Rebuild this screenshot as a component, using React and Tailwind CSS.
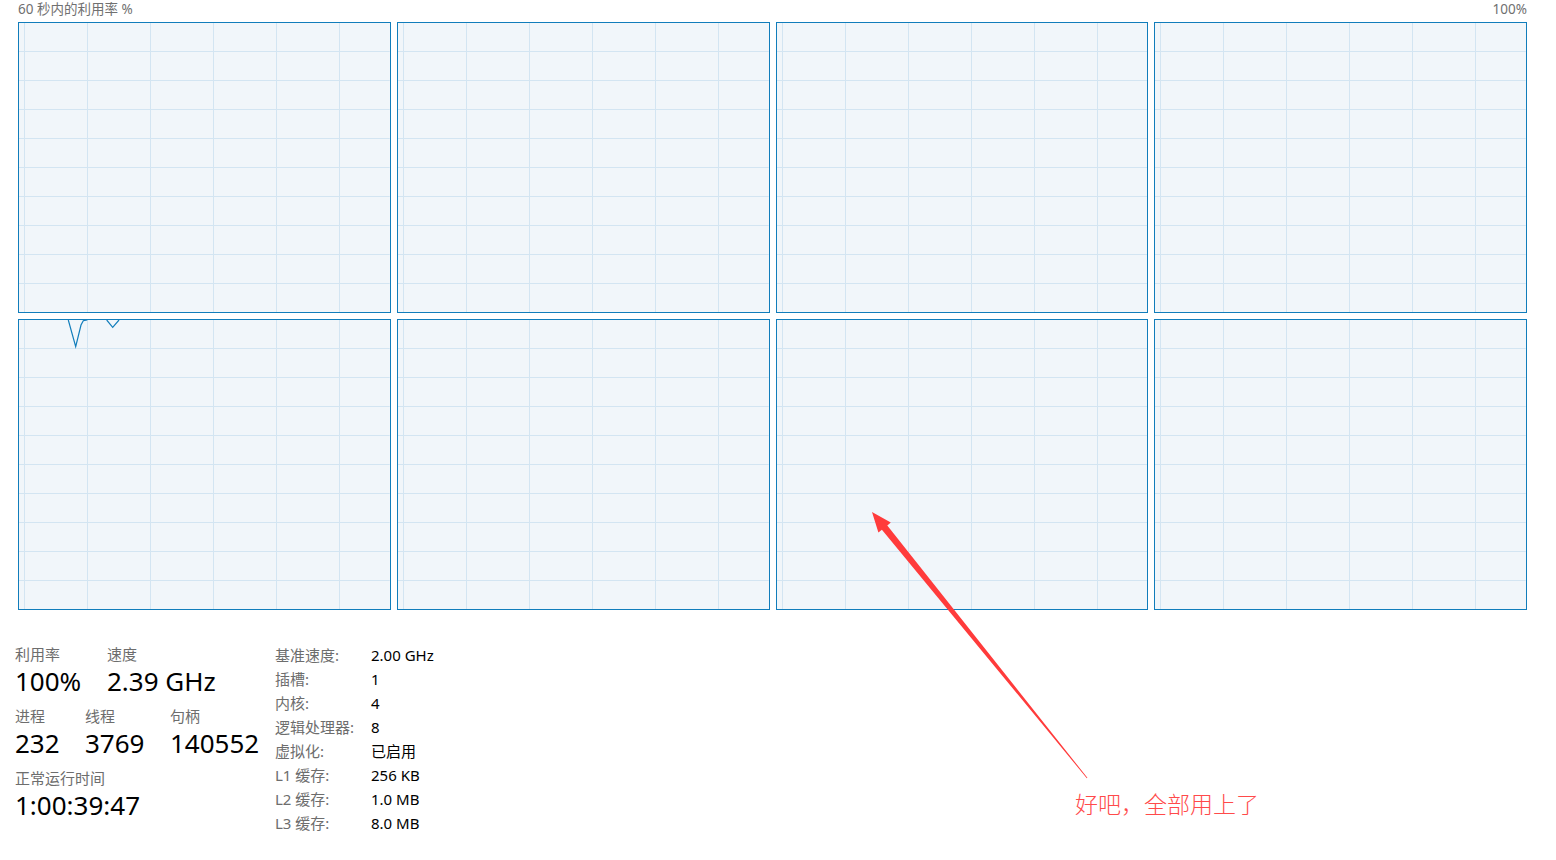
import React from "react";

const FONT = { fontFamily: '"Noto Sans", "Noto Sans CJK SC", sans-serif' };

function Graph({ spike }) {
  const vx = [5, 68, 131, 194, 257, 320];
  const hy = [28, 57, 86, 115, 144, 173, 202, 231, 260];
  return (
    <div className="h-[291px] border border-[#117dbb] bg-[#f1f6fa] overflow-hidden">
      <svg className="block w-full h-full" xmlns="http://www.w3.org/2000/svg">
        {hy.map((y) => (
          <line key={"h" + y} x1="0" x2="100%" y1={y + 0.5} y2={y + 0.5} stroke="#d3e5f2" strokeWidth="1" />
        ))}
        {vx.map((x) => (
          <line key={"v" + x} x1={x + 0.5} x2={x + 0.5} y1="0" y2="100%" stroke="#d3e5f2" strokeWidth="1" />
        ))}
        {spike && (
          <>
            <polyline
              points="49.3,0 56.7,26.7 62,5 64.3,0.7 68.3,0"
              fill="none"
              stroke="#117dbb"
              strokeWidth="1.2"
            />
            <polyline points="87.7,0 93.7,7.3 100,0" fill="none" stroke="#117dbb" strokeWidth="1.2" />
          </>
        )}
      </svg>
    </div>
  );
}

function Stat({ label, value, w }) {
  return (
    <div className={w}>
      <div className="text-[15px] leading-[20px] text-[#6d6d6d]">{label}</div>
      <div className="text-[26px] leading-[34px] text-black">{value}</div>
    </div>
  );
}

export default function App() {
  const rows = [
    ["基准速度:", "2.00 GHz"],
    ["插槽:", "1"],
    ["内核:", "4"],
    ["逻辑处理器:", "8"],
    ["虚拟化:", "已启用"],
    ["L1 缓存:", "256 KB"],
    ["L2 缓存:", "1.0 MB"],
    ["L3 缓存:", "8.0 MB"],
  ];
  return (
    <div className="relative w-[1556px] h-[860px] bg-white overflow-hidden" style={FONT}>
      <div className="flex justify-between pl-[18px] pr-[29px] text-[13.5px] leading-[18px] text-[#707070]">
        <span>60 秒内的利用率 %</span>
        <span>100%</span>
      </div>
      <div className="mt-[4px] ml-[18px] w-[1509px] grid grid-cols-4 gap-[6px]">
        <Graph />
        <Graph />
        <Graph />
        <Graph />
        <Graph spike />
        <Graph />
        <Graph />
        <Graph />
      </div>
      <div className="mt-[33px] flex items-start">
        <div className="w-[275px] pl-[15px] pt-[1px] flex flex-col gap-[8px]">
          <div className="flex">
            <Stat label="利用率" value="100%" w="w-[92px]" />
            <Stat label="速度" value="2.39 GHz" w="" />
          </div>
          <div className="flex">
            <Stat label="进程" value="232" w="w-[70px]" />
            <Stat label="线程" value="3769" w="w-[85px]" />
            <Stat label="句柄" value="140552" w="" />
          </div>
          <div className="flex">
            <Stat label="正常运行时间" value="1:00:39:47" w="" />
          </div>
        </div>
        <div className="flex flex-col text-[15px] leading-[24px]">
          {rows.map(([k, v]) => (
            <div key={k} className="flex">
              <span className="w-[96px] text-[#6d6d6d]">{k}</span>
              <span className="text-black">{v}</span>
            </div>
          ))}
        </div>
      </div>

      <svg
        className="absolute left-0 top-0 pointer-events-none"
        width="1556"
        height="860"
        xmlns="http://www.w3.org/2000/svg"
      >
        <polygon
          points="872,512 890.8,522.6 887.3,525.4 1087.4,777.8 1086.8,778.2 881.9,529.8 878.4,532.6"
          fill="#ff3b3b"
        />
      </svg>
      <div
        className="absolute left-[1075px] top-[788px] text-[23px] leading-[30px] text-[#ff4a4a] font-light"
        style={{ fontFamily: '"Noto Sans CJK SC", sans-serif' }}
      >
        好吧，全部用上了
      </div>
    </div>
  );
}
